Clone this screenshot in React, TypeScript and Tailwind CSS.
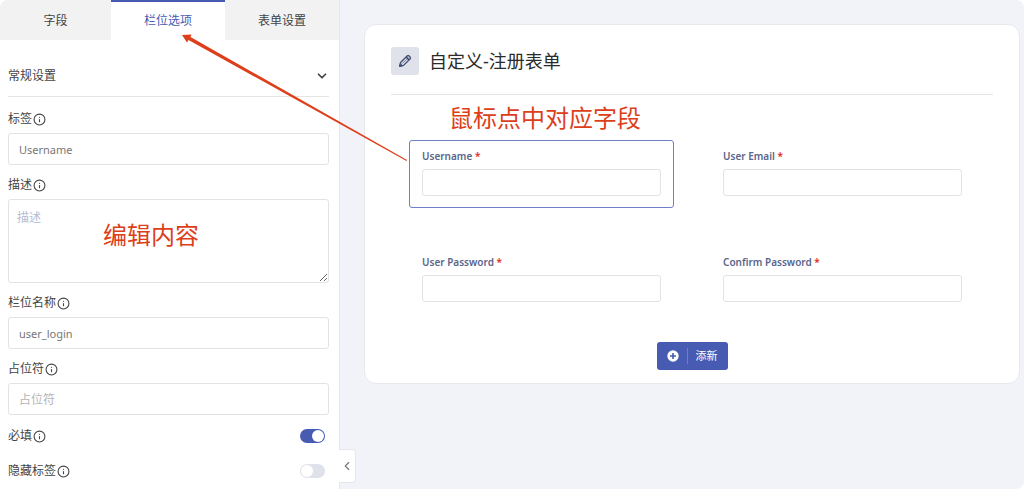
import { useState } from 'react';
import type { ReactNode } from 'react';
import clsx from 'clsx';
import { ChevronDown, ChevronLeft, Info } from 'lucide-react';

const TABS = ['字段', '栏位选项', '表单设置'];

const FIELDS = [
  { id: 'username', label: 'Username', type: 'text' },
  { id: 'user-email', label: 'User Email', type: 'email' },
  { id: 'user-password', label: 'User Password', type: 'password' },
  { id: 'confirm-password', label: 'Confirm Password', type: 'password' },
];

const inputClass =
  'block w-full h-8 rounded-[3px] border border-[#e3e3e3] bg-white px-2.5 text-[11px] text-[#777] outline-none placeholder:text-xs placeholder:text-[#b5b5b5]';

const FieldLabel = ({ htmlFor, children }: { htmlFor: string; children: ReactNode }) => (
  <label htmlFor={htmlFor} className="flex h-5 items-center gap-px text-xs text-[#444]">
    {children}
    <Info className="h-[13px] w-[13px]" strokeWidth={2} />
  </label>
);

const Toggle = ({ id, defaultChecked }: { id: string; defaultChecked?: boolean }) => (
  <span className="relative inline-flex h-3.5 w-[25px]">
    <input
      id={id}
      type="checkbox"
      role="switch"
      defaultChecked={defaultChecked}
      className="peer h-full w-full cursor-pointer appearance-none rounded-full bg-[#dfe2ea] checked:bg-[#475bb2]"
    />
    <span className="pointer-events-none absolute left-px top-px h-3 w-3 rounded-full bg-white peer-checked:left-auto peer-checked:right-px" />
  </span>
);

const Sidebar = () => {
  const [tab, setTab] = useState(1);

  return (
    <aside className="relative w-[340px] shrink-0 rounded-l-lg border-r border-[#e6e7ec] bg-white">
      <div role="tablist" className="grid h-10 grid-cols-[37fr_38fr_38fr] overflow-hidden rounded-tl-lg">
        {TABS.map((name, i) => (
          <button
            key={name}
            type="button"
            role="tab"
            aria-selected={tab === i}
            onClick={() => setTab(i)}
            className={clsx(
              'border-t-2 text-xs',
              tab === i
                ? 'border-[#475bb2] bg-white text-[#475bb2]'
                : 'border-[#f2f2f3] bg-[#f2f2f3] text-[#444]',
            )}
          >
            {name}
          </button>
        ))}
      </div>

      <div className="px-2 pt-4 pr-2.5">
        <button
          type="button"
          className="flex h-[41px] w-full items-center justify-between border-b border-[#e4e4e4] text-xs text-[#444]"
        >
          常规设置
          <ChevronDown className="h-3.5 w-3.5" strokeWidth={3} />
        </button>

        <div className="flex flex-col gap-2.5 pt-3">
          <div className="flex flex-col gap-1">
            <FieldLabel htmlFor="label">标签</FieldLabel>
            <input id="label" defaultValue="Username" className={inputClass} />
          </div>
          <div className="flex flex-col gap-1">
            <FieldLabel htmlFor="description">描述</FieldLabel>
            <textarea
              id="description"
              placeholder="描述"
              className="block h-[84px] w-full resize rounded-[3px] border border-[#e3e3e3] px-2 py-2.5 text-xs outline-none placeholder:text-[#b4bdd3]"
            />
          </div>
          <div className="flex flex-col gap-1">
            <FieldLabel htmlFor="field-name">栏位名称</FieldLabel>
            <input id="field-name" defaultValue="user_login" className={inputClass} />
          </div>
          <div className="flex flex-col gap-1">
            <FieldLabel htmlFor="placeholder">占位符</FieldLabel>
            <input id="placeholder" placeholder="占位符" className={inputClass} />
          </div>
          <div className="flex flex-col gap-[15px] pt-px pr-1">
            <div className="flex items-center justify-between">
              <FieldLabel htmlFor="required">必填</FieldLabel>
              <Toggle id="required" defaultChecked />
            </div>
            <div className="flex items-center justify-between">
              <FieldLabel htmlFor="hide-label">隐藏标签</FieldLabel>
              <Toggle id="hide-label" />
            </div>
          </div>
        </div>
      </div>

      {/* Collapse handle */}
      <button
        type="button"
        aria-label="Collapse"
        className="absolute bottom-1.5 left-full flex h-[34px] w-[17px] items-center justify-center rounded-r-sm border border-l-0 border-[#e6e7ec] bg-white text-[#777]"
      >
        <ChevronLeft className="h-3.5 w-3.5" strokeWidth={2} />
      </button>
    </aside>
  );
};

const FormPreview = () => {
  const [selected, setSelected] = useState('username');

  return (
    <main className="min-w-0 flex-1 py-6 pl-6 pr-1">
      <section className="rounded-xl border border-[#e8e9ed] bg-white px-[26px] pt-[22px] pb-[13px]">
        <header className="flex h-12 items-start gap-2.5 border-b border-[#e4e4e4]">
          <button
            type="button"
            aria-label="Edit"
            className="flex h-7 w-7 items-center justify-center rounded-[3px] bg-[#dfe2ea] text-[#475174]"
          >
            <svg viewBox="0 0 24 24" className="h-3.5 w-3.5" fill="none" stroke="currentColor" strokeWidth="2.4" strokeLinejoin="round">
              <path d="M3 21l1.500-6.500L16 3q1.500-1 3 .5l1.500 1.500q1.500 1.500 .5 3L9.500 19.500z" />
              <path d="M14 5l5 5" strokeWidth="3" />
              <path d="M7.500 16.500l8-8" strokeWidth="1" />
              <path d="M3 21l1-4 3 3z" fill="currentColor" />
            </svg>
          </button>
          <h1 className="text-lg leading-7 text-[#2b2b2b]">自定义-注册表单</h1>
        </header>

        <div className="grid grid-cols-2 gap-y-[38px] pt-[45px]">
          {FIELDS.map((f) => (
            <div key={f.id} className="px-[18px]">
              <div
                onClick={() => setSelected(f.id)}
                className={clsx(
                  'h-[68px] rounded-[3px] border px-3 pt-[5px]',
                  selected === f.id ? 'border-[#6f80c6]' : 'border-transparent',
                )}
              >
                <label htmlFor={f.id} className="block h-5 text-[10px] leading-5 font-semibold text-[#5a658a]">
                  {f.label} <span className="text-[#e02b1d]">*</span>
                </label>
                <input
                  id={f.id}
                  type={f.type}
                  className="mt-[3px] block h-[27px] w-full rounded-[3px] border border-[#e3e3e3] px-2 text-[11px] outline-none"
                />
              </div>
            </div>
          ))}
        </div>

        <div className="mt-7 flex justify-center">
          <button
            type="button"
            className="flex h-7 w-[71px] items-center rounded-[3px] bg-[#475bb2] pl-2.5 text-[11px] text-white"
          >
            <svg viewBox="0 0 12 12" className="h-3 w-3">
              <circle cx="6" cy="6" r="5.700" fill="currentColor" />
              <path d="M6 3v6M3 6h6" stroke="#475bb2" strokeWidth="1.600" />
            </svg>
            <span className="ml-2 h-4 border-l border-[#6f7fc6] pl-2 leading-4">添新</span>
          </button>
        </div>
      </section>
    </main>
  );
};

// Notes laid over the screen
const Annotations = () => (
  <div className="pointer-events-none absolute inset-0 text-2xl leading-8 text-[#dd3f1a]">
    <svg className="absolute left-0 top-0" width="420" height="180" fill="#dd3f1a">
      <path d="M182 35L191.500 34.500L190.500 37L407 160L406.500 161L188.500 40L187 42.500z" />
    </svg>
    <p className="absolute left-[103px] top-[219px]">编辑内容</p>
    <p className="absolute left-[449px] top-[102px]">鼠标点中对应字段</p>
  </div>
);

export default function App() {
  return (
    <div className="bg-white font-['Noto_Sans','Noto_Sans_CJK_SC',sans-serif]">
      <div className="relative flex min-h-screen rounded-lg bg-[#f2f3f8]">
        <Sidebar />
        <FormPreview />
        <Annotations />
      </div>
    </div>
  );
}
